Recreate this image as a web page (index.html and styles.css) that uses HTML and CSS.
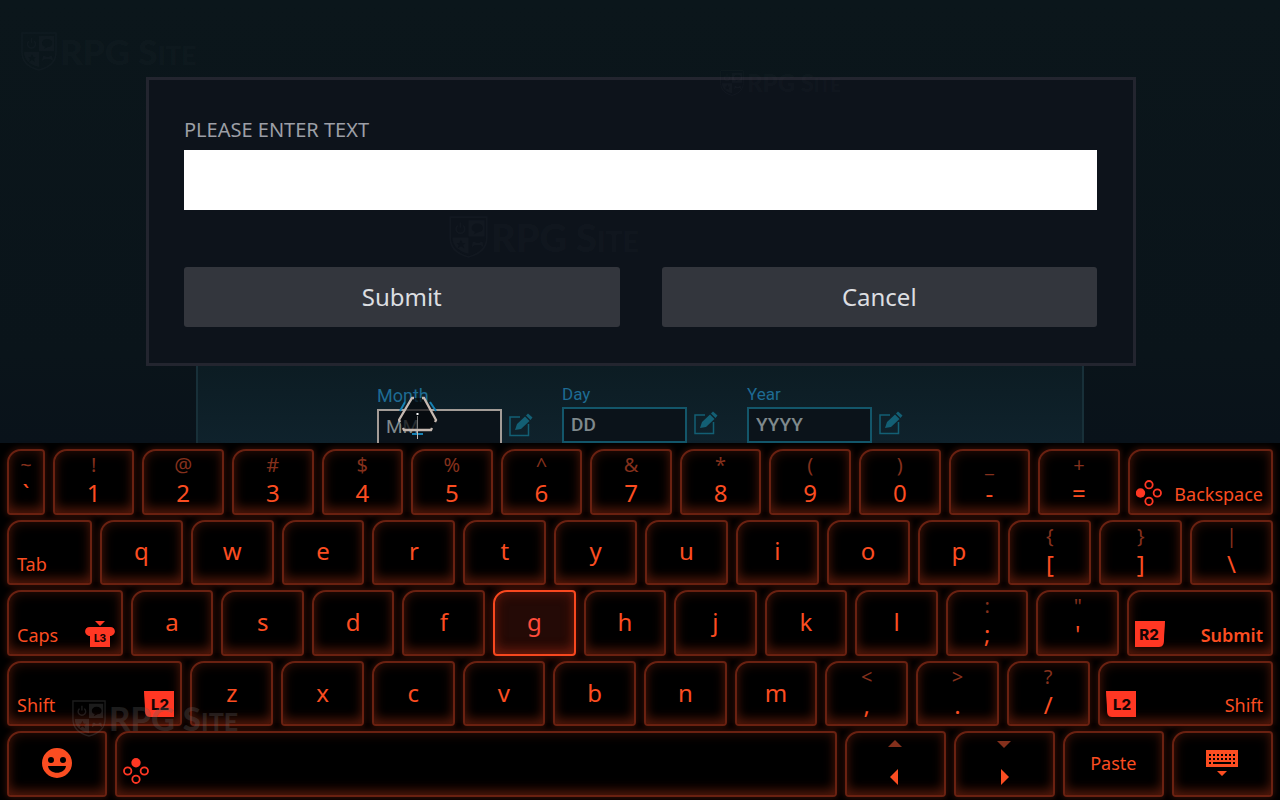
FILE: index.html
```
<!DOCTYPE html>
<html lang="en">
<head>
<meta charset="utf-8">
<title>Enter text</title>
<link rel="stylesheet" href="styles.css">
</head>
<body>
<svg class="defs" aria-hidden="true">
  <symbol id="shield" viewBox="0 0 36 39">
    <path d="M1 1H35V20C35 31 26 36 18 38C10 36 1 31 1 20Z" fill="none" stroke="currentColor" stroke-width="1.5"/>
    <path fill-rule="evenodd" fill="currentColor" d="M18 4H33V19H18ZM21 11C21 15 24 14 24 15L23 17L27 15C33 15 33 7 26 7C23 7 21 9 21 11Z"/>
    <path fill-rule="evenodd" fill="currentColor" d="M3 20H18V35C9 33 3 28 3 20ZM11 22L12.500 25H15L13 27L14 30L11 28L8 30L9 27L7 25H9.500Z"/>
    <path d="M8 9a4 4 0 1 0 5 0M10.500 6v5" fill="none" stroke="currentColor" stroke-width="1.500"/>
    <path d="M21 29l1-5h2l1 1h3l1-1h2l1 5-3-2h-5z" fill="currentColor"/>
  </symbol>
  <symbol id="edit" viewBox="0 0 24 24">
    <path d="M11 4H1V22.500H19.500V11" fill="none" stroke="currentColor" stroke-width="1.500"/>
    <path d="M6 17L8 11L16 3.500L20.500 8L12 16Z M17 2.500L19 .5L23.500 4.500L21.500 7Z" fill="currentColor"/>
  </symbol>
  <symbol id="pad-left" viewBox="0 0 26 26">
    <circle cx="4.500" cy="13" r="4.700" fill="currentColor"/>
    <g fill="none" stroke="currentColor" stroke-width="1.800"><circle cx="13" cy="4.700" r="3.700"/><circle cx="21.300" cy="13" r="3.700"/><circle cx="13" cy="21.300" r="3.700"/></g>
  </symbol>
  <symbol id="pad-top" viewBox="0 0 26 26">
    <circle cx="13" cy="4.700" r="4.700" fill="currentColor"/>
    <g fill="none" stroke="currentColor" stroke-width="1.800"><circle cx="4.700" cy="13" r="3.700"/><circle cx="21.300" cy="13" r="3.700"/><circle cx="13" cy="21.300" r="3.700"/></g>
  </symbol>
</svg>

<main class="scene">
  <form class="birthday">
    <div class="field focused">
      <label for="month">Month</label>
      <div class="field-row"><input id="month" type="text" placeholder="MM"><svg class="edit"><use href="#edit"/></svg></div>
      <svg class="cursor" viewBox="0 0 40 44" aria-hidden="true">
        <path d="M15 2H25L38 25L32 34H7L1 25Z" fill="#05080c" fill-opacity=".7"/>
        <path d="M7 6L2 15M32 6L38 15M14 38H25" stroke="#1782b4" stroke-width="2" fill="none"/>
        <path d="M19.500 35V43" stroke="#c6b9b1" stroke-width="1"/>
        <path d="M16 2H14L1 24L2 26M24 2H26L38 24L37 26M5 32L6 34H33L34 32" stroke="#c6b9b1" stroke-width="2.300" fill="none"/>
        <path d="M18.500 17h2v2h-2z" fill="#fff"/><path d="M19.500 20V33" stroke="#777"/>
      </svg>
    </div>
    <div class="field">
      <label for="day">Day</label>
      <div class="field-row"><input id="day" type="text" placeholder="DD"><svg class="edit"><use href="#edit"/></svg></div>
    </div>
    <div class="field">
      <label for="year">Year</label>
      <div class="field-row"><input id="year" type="text" placeholder="YYYY"><svg class="edit"><use href="#edit"/></svg></div>
    </div>
  </form>

  <section class="dialog" role="dialog" aria-labelledby="prompt">
    <label class="prompt" id="prompt" for="entry">PLEASE ENTER TEXT</label>
    <input class="entry" id="entry" type="text">
    <div class="actions">
      <button type="button">Submit</button>
      <button type="button">Cancel</button>
    </div>
  </section>

  <div class="mark mark-a"><svg><use href="#shield"/></svg><span>RPG S<small>ITE</small></span></div>
  <div class="mark mark-b"><svg><use href="#shield"/></svg><span>RPG S<small>ITE</small></span></div>
  <div class="mark mark-c"><svg><use href="#shield"/></svg><span>RPG S<small>ITE</small></span></div>
</main>

<section class="keyboard" aria-label="Keyboard">
  <div class="row row-1">
    <button class="key dual"><span>~</span><b>`</b></button>
    <button class="key dual"><span>!</span><b>1</b></button>
    <button class="key dual"><span>@</span><b>2</b></button>
    <button class="key dual"><span>#</span><b>3</b></button>
    <button class="key dual"><span>$</span><b>4</b></button>
    <button class="key dual"><span>%</span><b>5</b></button>
    <button class="key dual"><span>^</span><b>6</b></button>
    <button class="key dual"><span>&amp;</span><b>7</b></button>
    <button class="key dual"><span>*</span><b>8</b></button>
    <button class="key dual"><span>(</span><b>9</b></button>
    <button class="key dual"><span>)</span><b>0</b></button>
    <button class="key dual"><span>_</span><b>-</b></button>
    <button class="key dual"><span>+</span><b>=</b></button>
    <button class="key wide"><svg class="pad"><use href="#pad-left"/></svg><span>Backspace</span></button>
  </div>
  <div class="row row-2">
    <button class="key wide"><span>Tab</span></button>
    <button class="key">q</button>
    <button class="key">w</button>
    <button class="key">e</button>
    <button class="key">r</button>
    <button class="key">t</button>
    <button class="key">y</button>
    <button class="key">u</button>
    <button class="key">i</button>
    <button class="key">o</button>
    <button class="key">p</button>
    <button class="key dual"><span>{</span><b>[</b></button>
    <button class="key dual"><span>}</span><b>]</b></button>
    <button class="key dual"><span>|</span><b>\</b></button>
  </div>
  <div class="row row-3">
    <button class="key wide"><span>Caps</span>
      <svg class="trigger" viewBox="0 0 30 26"><path d="M10 0H20L15 5ZM5 6H25C32 6 31 15 25 15V26H5V15C-1 15-2 6 5 6Z" fill="currentColor"/><text class="stick-text" x="15" y="21" text-anchor="middle">L3</text></svg></button>
    <button class="key">a</button>
    <button class="key">s</button>
    <button class="key">d</button>
    <button class="key">f</button>
    <button class="key active">g</button>
    <button class="key">h</button>
    <button class="key">j</button>
    <button class="key">k</button>
    <button class="key">l</button>
    <button class="key dual"><span>:</span><b>;</b></button>
    <button class="key dual"><span>"</span><b>'</b></button>
    <button class="key wide strong">
      <svg class="trigger" viewBox="0 0 30 26"><path d="M0 0H30C30 6 29 12 29 19C29 23 28 26 24 26H0Z" fill="currentColor"/><text class="badge-text" x="14" y="19" text-anchor="middle">R2</text></svg><span>Submit</span></button>
  </div>
  <div class="row row-4">
    <button class="key wide"><span>Shift</span>
      <svg class="trigger" viewBox="0 0 30 26"><path d="M0 0H30V26H6C2 26 1 23 1 19C1 12 0 6 0 0Z" fill="currentColor"/><text class="badge-text" x="16" y="19" text-anchor="middle">L2</text></svg></button>
    <button class="key">z</button>
    <button class="key">x</button>
    <button class="key">c</button>
    <button class="key">v</button>
    <button class="key">b</button>
    <button class="key">n</button>
    <button class="key">m</button>
    <button class="key dual"><span>&lt;</span><b>,</b></button>
    <button class="key dual"><span>&gt;</span><b>.</b></button>
    <button class="key dual"><span>?</span><b>/</b></button>
    <button class="key wide">
      <svg class="trigger" viewBox="0 0 30 26"><path d="M0 0H30V26H6C2 26 1 23 1 19C1 12 0 6 0 0Z" fill="currentColor"/><text class="badge-text" x="16" y="19" text-anchor="middle">L2</text></svg><span>Shift</span></button>
  </div>
  <div class="row row-5">
    <button class="key" aria-label="Emoji"><svg class="emoji" viewBox="0 0 30 30"><path fill="currentColor" fill-rule="evenodd" d="M15 0a15 15 0 1 0 0 30a15 15 0 1 0 0-30ZM9 9a3 3 0 1 1 0 6a3 3 0 1 1 0-6ZM21 9a3 3 0 1 1 0 6a3 3 0 1 1 0-6ZM6 18H24C23 27 7 27 6 18Z"/></svg></button>
    <button class="key wide space" aria-label="Space"><svg class="pad"><use href="#pad-top"/></svg></button>
    <button class="key" aria-label="Up or left"><svg class="arrows" viewBox="0 0 16 46"><path class="dim" d="M1 7L8 0L15 7Z"/><path fill="currentColor" d="M11 29V45L3 37Z"/></svg></button>
    <button class="key" aria-label="Down or right"><svg class="arrows" viewBox="0 0 16 46"><path class="dim" d="M1 1L8 8L15 1Z"/><path fill="currentColor" d="M5 29V45L13 37Z"/></svg></button>
    <button class="key small">Paste</button>
    <button class="key" aria-label="Hide keyboard"><svg class="board" viewBox="0 0 32 26"><path fill="currentColor" d="M0 0H32V17H0ZM11 21H21L16 26Z"/><path d="M3 5H30M3 9H30" stroke="#000" stroke-width="2" stroke-dasharray="2 2"/><path d="M3 13H5M7 13H25M27 13H29" stroke="#000" stroke-width="2"/></svg></button>
  </div>
  <div class="mark mark-d"><svg><use href="#shield"/></svg><span>RPG S<small>ITE</small></span></div>
</section>
</body>
</html>
```
FILE: styles.css
```
* { box-sizing: border-box; }

body {
  margin: 0;
  min-height: 100vh;
  display: flex;
  flex-direction: column;
  background: #000;
  font-family: "Noto Sans", "Open Sans", sans-serif;
}

button, input { font: inherit; border-radius: 0; }
.defs { position: absolute; width: 0; height: 0; }

/* Dimmed page behind the dialog */
.scene {
  flex: 1;
  min-height: 443px;
  position: relative;
  display: flex;
  flex-direction: column;
  justify-content: flex-end;
  align-items: center;
  overflow: hidden;
  background: linear-gradient(#0b161b, #0a141a 80%, #09121a);
}

.birthday {
  width: 70%;
  max-width: 888px;
  padding: 90px 0 0 179px;
  display: flex;
  gap: 29px;
  border: solid #183039;
  border-width: 0 2px;
  background: linear-gradient(#0b191f, #0c1c23 50%, #0f222c);
}

.field { width: 156px; position: relative; }
.field label {
  display: block;
  font-family: Roboto, sans-serif;
  font-size: 17px;
  line-height: 26px;
  color: #1e6b93;
}
.field-row { display: flex; align-items: center; gap: 7px; }
.field input {
  width: 125px;
  height: 36px;
  padding: 0 7px 2px;
  font-family: Roboto, sans-serif;
  font-size: 19px;
  font-weight: 500;
  color: #7f898c;
  background: #0b131a;
  border: 2px solid #13566a;
}
.field input::placeholder { color: #7f898c; opacity: 1; }
.edit { width: 24px; height: 24px; margin-bottom: 4px; color: #135f74; }
.focused { top: 2px; }
.focused label { font-size: 18px; }
.focused input { border-color: #a39c97; font-weight: 400; }
.cursor { position: absolute; left: 21px; top: 13px; width: 40px; height: 44px; }

/* Text entry dialog */
.dialog {
  position: absolute;
  top: 77px;
  left: 146px;
  right: 144px;
  padding: 37px 36px 36px 35px;
  border: 3px solid #23252f;
  background: #0d131b;
}
.prompt {
  display: block;
  font-size: 20px;
  line-height: 26px;
  padding-bottom: 7px;
  color: #9c9fa6;
}
.entry {
  display: block;
  width: 100%;
  height: 60px;
  padding: 0 16px;
  font-size: 24px;
  border: 0;
  background: #fff;
}
.actions { display: flex; gap: 42px; margin-top: 57px; }
.actions button {
  flex: 1;
  height: 60px;
  padding: 0 0 2px;
  border: 0;
  border-radius: 3px;
  font-size: 24px;
  color: #dcdee1;
  background: #33363d;
}

/* Watermarks */
.mark {
  position: absolute;
  display: flex;
  align-items: center;
  gap: 3px;
  pointer-events: none;
  font-family: Lato, sans-serif;
  font-weight: 900;
  line-height: 1;
  white-space: nowrap;
  color: rgba(120, 125, 130, 0.05);
  font-size: 35px;
}
.mark svg { width: 36px; height: 39px; }
.mark small { font-size: 26px; }
.mark-a { left: 21px; top: 32px; }
.mark-b { left: 720px; top: 70px; font-size: 24px; }
.mark-b svg { width: 24px; height: 26px; }
.mark-b small { font-size: 18px; }
.mark-c { left: 449px; top: 216px; font-size: 38px; }
.mark-c svg { width: 39px; height: 42px; }
.mark-c small { font-size: 28px; }
.mark-d { left: 72px; top: 257px; font-size: 33px; color: rgba(100, 100, 100, 0.28); }
.mark-d svg { width: 34px; height: 37px; }
.mark-d small { font-size: 25px; }

/* On-screen keyboard */
.keyboard {
  position: relative;
  min-height: 357px;
  display: grid;
  grid-auto-rows: 1fr;
  gap: 5px;
  padding: 6px 7px 3px 7px;
  background: #000;
}
.row { display: grid; gap: 8px; }
.row-1 { grid-template-columns: 38fr repeat(12, minmax(0, 82fr)) 146fr; }
.row-2 { grid-template-columns: 85fr repeat(13, minmax(0, 83fr)); }
.row-3 { grid-template-columns: 115fr repeat(11, minmax(0, 82fr)) 145fr; }
.row-4 { grid-template-columns: 174fr repeat(10, minmax(0, 82fr)) 174fr; }
.row-5 { grid-template-columns: 100fr 721fr repeat(4, 101fr); }

.key {
  min-width: 0;
  min-height: 65px;
  padding: 0 0 2px;
  display: flex;
  align-items: center;
  justify-content: center;
  font-size: 24px;
  line-height: 28px;
  color: #fb4d21;
  background: #000;
  border: 2px solid #6a2111;
  border-radius: 14px 4px 4px 4px;
  box-shadow: 0 0 6px 1px rgba(170, 50, 22, 0.3), inset 0 0 12px 1px rgba(150, 45, 20, 0.3), inset 0 -8px 12px -3px rgba(160, 48, 22, 0.38);
}
.dual { flex-direction: column; padding-bottom: 5px; }
.dual span { font-size: 20px; color: #84301c; }
.dual b { font-weight: 400; }
.wide {
  align-items: flex-end;
  justify-content: space-between;
  padding: 0 8px 5px;
  font-size: 18px;
}
.wide svg { margin: 0 -2px 2px; }
.space { padding-bottom: 9px; }
.small { font-size: 18px; }
.strong { font-weight: 600; }
.key.active {
  color: #ff4c3c;
  border-color: #f8481f;
  background: #240a06;
  box-shadow: 0 0 10px 1px rgba(230, 50, 20, 0.4), inset 0 0 12px 1px rgba(190, 45, 20, 0.35), inset 0 -8px 12px -3px rgba(190, 45, 20, 0.3);
}

.pad { width: 26px; height: 26px; color: #ff3723; }
.trigger { width: 30px; height: 26px; color: #ff3723; }
.badge-text { font: 800 15px Inter, sans-serif; fill: #160403; }
.stick-text { font: 800 10px Inter, sans-serif; fill: #160403; }
.emoji { width: 30px; height: 30px; }
.arrows { width: 16px; height: 46px; }
.arrows .dim { fill: #84301c; }
.board { width: 32px; height: 26px; }
```
